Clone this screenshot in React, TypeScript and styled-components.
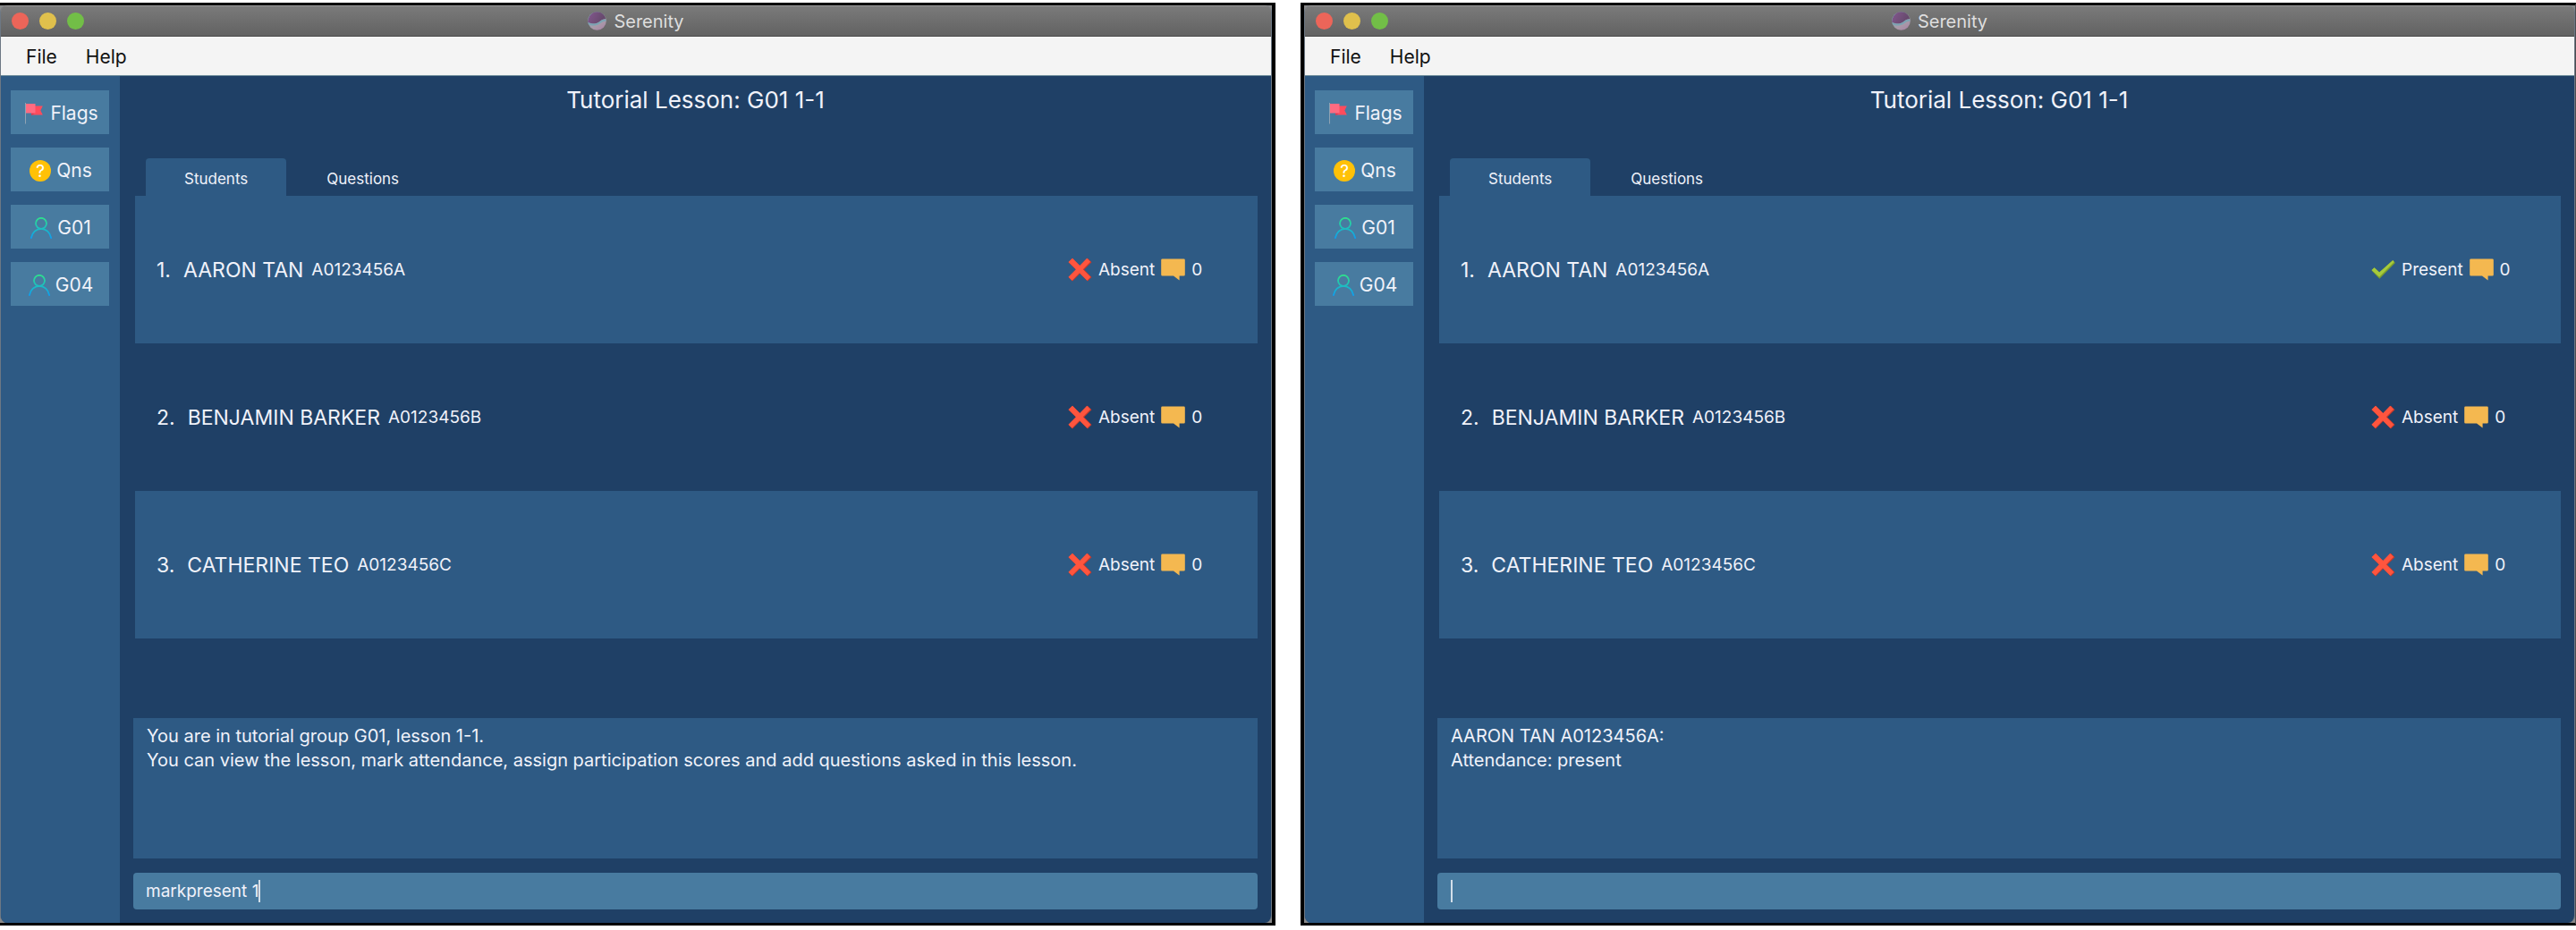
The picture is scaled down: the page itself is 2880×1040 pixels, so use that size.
import React, { useId, useState } from "react";
import styled, { createGlobalStyle, css } from "styled-components";

const color = {
  night: "#1f4066",
  panel: "#2e5a84",
  control: "#487ba0",
  text: "#f0f2fa",
  menu: "#f4f4f4",
};

const GlobalStyle = createGlobalStyle`
  * { box-sizing: border-box; }
  body {
    margin: 0;
    background: #ffffff;
    color: ${color.text};
    font-family: Inter, "Liberation Sans", sans-serif;
  }
  button, input { font: inherit; color: inherit; }
`;

const Desktop = styled.div`
  display: grid;
  grid-template-columns: 1fr 1fr;
  gap: 28px;
  min-height: 100vh;
  padding: 3px 0 5px;
`;

const Frame = styled.section<{ $side: "left" | "right" }>`
  display: flex;
  min-width: 0;
  background: #8a8a8a;
  border: 3px solid #000000;
  ${({ $side }) =>
    $side === "left"
      ? css`
          border-left: 0;
          border-right-width: 4px;
        `
      : css`
          border-left-width: 4px;
          border-right: 1px solid #4c4c50;
        `}
`;

const Window = styled.div`
  display: flex;
  flex: 1;
  flex-direction: column;
  min-width: 0;
  overflow: hidden;
  border: 0 solid #6d7884;
  border-width: 0 1px;
  border-radius: 8px;
`;

const TitleBar = styled.header`
  display: grid;
  grid-template-columns: 1fr auto 1fr;
  align-items: center;
  height: 35px;
  padding: 0 12px;
  background: linear-gradient(#7a7a7a, #626262);
  border-top: 1px solid #9a9a9a;
  border-bottom: 1px solid #484848;
`;

const Lights = styled.div`
  display: flex;
  gap: 12px;
`;

const Light = styled.button<{ $tint: string }>`
  width: 19px;
  height: 19px;
  padding: 0;
  border: 0;
  border-radius: 50%;
  background: ${({ $tint }) => $tint};
`;

const AppName = styled.div`
  display: flex;
  align-items: center;
  gap: 8px;
  color: #dedede;
  font-size: 20px;
  line-height: 24px;
`;

const MenuBar = styled.nav`
  display: flex;
  align-items: center;
  gap: 32px;
  height: 44px;
  padding: 2px 28px 0;
  background: ${color.menu};
  border-bottom: 1px solid #6f8e9c;
`;

const MenuItem = styled.button`
  padding: 0;
  border: 0;
  background: none;
  color: #111111;
  font-size: 21px;
  line-height: 24px;
`;

const Body = styled.div`
  display: flex;
  flex: 1;
  background: ${color.night};
`;

const Sidebar = styled.aside`
  display: flex;
  flex: 0 0 133px;
  flex-direction: column;
  gap: 15px;
  padding: 16px 12px 16px 11px;
  background: ${color.panel};
`;

const SideButton = styled.button`
  display: flex;
  align-items: center;
  justify-content: center;
  gap: 6px;
  height: 49px;
  padding: 2px 0 0 2px;
  border: 0;
  background: ${color.control};
  font-size: 21px;
  line-height: 24px;
`;

const Main = styled.main`
  display: flex;
  flex: 1;
  flex-direction: column;
  min-width: 0;
  padding: 12px 15px 15px;
`;

const Heading = styled.h1`
  margin: 0 0 50px;
  font-size: 26px;
  font-weight: 400;
  line-height: 30px;
  text-align: center;
`;

const Tabs = styled.div`
  display: flex;
  gap: 2px;
  padding: 0 14px;
`;

const Tab = styled.button<{ $active?: boolean }>`
  height: 42px;
  padding: 3px 43px 0;
  border: 0;
  border-radius: 4px 4px 0 0;
  background: ${({ $active }) => ($active ? color.panel : "transparent")};
  font-size: 17px;
  line-height: 24px;
`;

const StudentList = styled.ul`
  margin: 0 0 16px 2px;
  padding: 0;
  list-style: none;
`;

const StudentRow = styled.li`
  display: flex;
  align-items: center;
  height: 165px;
  padding-left: 24px;
  &:nth-child(odd) {
    background: ${color.panel};
  }
`;

const Identity = styled.div`
  display: flex;
  flex: 1;
  align-items: center;
  font-size: 23px;
  line-height: 28px;
`;

const Name = styled.span`
  margin: 0 9px 0 14px;
`;

const Matric = styled.span`
  font-size: 19px;
  line-height: 24px;
`;

const Status = styled.div`
  display: flex;
  flex: 0 0 212px;
  align-items: center;
  gap: 7px;
  font-size: 19px;
  line-height: 24px;
`;

const Result = styled.div`
  min-height: 157px;
  margin: auto 0 16px;
  padding: 7px 15px;
  background: ${color.panel};
  font-size: 20px;
  line-height: 27px;
  white-space: pre-line;
`;

const CommandBox = styled.label`
  display: flex;
  align-items: center;
  height: 41px;
  padding: 0 14px;
  border-radius: 4px;
  background: ${color.control};
`;

const CommandInput = styled.input`
  field-sizing: content;
  min-width: 0;
  padding: 0;
  border: 0;
  outline: 0;
  background: none;
  caret-color: transparent;
  font-size: 19px;
  line-height: 24px;
`;

const Caret = styled.span`
  width: 2px;
  height: 25px;
  background: #d3dfe9;
`;

const Icon = styled.svg`
  display: block;
  flex: none;
`;

function LogoIcon() {
  const id = useId();
  return (
    <Icon width="21" height="21" viewBox="0 0 21 21" aria-hidden="true">
      <defs>
        <linearGradient id={id} x1="0" y1="0" x2="0.6" y2="1">
          <stop offset="0.3" stopColor="#7fa9bb" />
          <stop offset="0.75" stopColor="#a99aa8" />
          <stop offset="1" stopColor="#a98aa6" />
        </linearGradient>
        <linearGradient id={`${id}t`} x1="0" y1="0" x2="1" y2="0.4">
          <stop offset="0" stopColor="#84588f" />
          <stop offset="1" stopColor="#64486a" />
        </linearGradient>
      </defs>
      <circle cx="10.5" cy="10.5" r="10.3" fill={`url(#${id})`} />
      <path d="M.3 12C.3 5 5 .2 10.5 .2c4.700 0 8.700 3.200 9.800 7.800-3.800.3-5.300 2-7.800 3.700C8.700 14.300 4.500 13.800 .3 12z" fill={`url(#${id}t)`} />
      <path d="M.4 12.200c4.500 1.800 8.800 1.700 12.500-.8 2.400-1.700 3.800-2.900 7.300-2.900l.3 2.200c-3.300-.2-4.700 1.200-7 2.700-4 2.600-8.500 2.600-12.500.8z" fill="#7ba3b3" />
    </Icon>
  );
}

function FlagIcon() {
  return (
    <Icon width="24" height="24" viewBox="0 0 24 24" aria-hidden="true">
      <path d="M9 3.500h12.800l-2.500 5 2.500 5H9z" fill="#ff4b5c" />
      <path d="M9 11.500h4.500L9 14z" fill="#d63a50" />
      <path d="M2.500 1h11v10.500h-11z" fill="#ff6b81" />
      <path d="M2.500 0v23.500" stroke="#8fa3b3" strokeWidth="1" />
    </Icon>
  );
}

const QuestionMark = styled.text`
  fill: #ffffff;
  font-size: 19px;
  text-anchor: middle;
`;

function QuestionIcon() {
  return (
    <Icon width="24" height="24" viewBox="0 0 24 24" aria-hidden="true">
      <circle cx="12" cy="12" r="12" fill="#ffc107" />
      <QuestionMark x="12" y="19">?</QuestionMark>
    </Icon>
  );
}

function PersonIcon() {
  const id = useId();
  return (
    <Icon width="24" height="24" viewBox="0 0 24 24" aria-hidden="true">
      <defs>
        <linearGradient id={id} gradientUnits="userSpaceOnUse" x1="0" y1="0" x2="0" y2="24">
          <stop offset="0" stopColor="#2fe38a" />
          <stop offset="1" stopColor="#0c9cf2" />
        </linearGradient>
      </defs>
      <g fill="none" stroke={`url(#${id})`} strokeWidth="1.8" strokeLinecap="round">
        <circle cx="12" cy="6.800" r="6" />
        <path d="M.9 23C2 17 6.500 12.900 12 12.900S22 17 23.100 23" />
      </g>
    </Icon>
  );
}

function CrossIcon() {
  return (
    <Icon width="27" height="27" viewBox="0 0 27 27" aria-hidden="true">
      <path d="M5 .8l8.500 8.500L22 .8l4.500 4.400-8.400 8.400 8.400 8.500-4.500 4.300-8.500-8.500L5 26.400l-4.500-4.300 8.500-8.500L.5 5.200z" fill="#c2382c" />
      <path d="M5 .8l8.200 8.200L21.200 .8l3.900 4-8.300 8.500 8.500 8.500-3.900 4-8.500-8.500-8.300 8.400-4.100-4 8.400-8.400L.5 5z" fill="#ff553e" />
    </Icon>
  );
}

function CheckIcon() {
  return (
    <Icon width="27" height="27" viewBox="0 0 27 27" aria-hidden="true">
      <path d="M.5 14.500l3-3.200 5.700 5.300L24.300 3l2.500 3L9.300 23.800z" fill="#7d9f2c" />
      <path d="M.5 14l3-2.700 5.700 5.300L24.300 3l1.300 1.900L9.100 21.700z" fill="#a6cb3c" />
    </Icon>
  );
}

function CommentIcon() {
  return (
    <Icon width="27" height="27" viewBox="0 0 27 27" aria-hidden="true">
      <path d="M1.500 1.500h24q1.300 0 1.300 1.300v16.400q0 1.300-1.300 1.300H20.600v5L14 20.500H1.500Q.2 20.500 .2 19.200V2.800Q.2 1.500 1.500 1.500z" fill="#f4b850" />
    </Icon>
  );
}

const sideLinks = [
  { label: "Flags", icon: <FlagIcon /> },
  { label: "Qns", icon: <QuestionIcon /> },
  { label: "G01", icon: <PersonIcon /> },
  { label: "G04", icon: <PersonIcon /> },
];

const students = [
  { name: "AARON TAN", matric: "A0123456A" },
  { name: "BENJAMIN BARKER", matric: "A0123456B" },
  { name: "CATHERINE TEO", matric: "A0123456C" },
];

interface SerenityProps {
  side: "left" | "right";
  present: string[];
  result: string;
  initialCommand: string;
}

function SerenityWindow({ side, present, result, initialCommand }: SerenityProps) {
  const [command, setCommand] = useState(initialCommand);
  return (
    <Frame $side={side}>
      <Window>
        <TitleBar>
          <Lights>
            <Light $tint="#ec6559" aria-label="Close" />
            <Light $tint="#e0c04c" aria-label="Minimise" />
            <Light $tint="#72be47" aria-label="Zoom" />
          </Lights>
          <AppName>
            <LogoIcon />
            Serenity
          </AppName>
        </TitleBar>
        <MenuBar>
          <MenuItem>File</MenuItem>
          <MenuItem>Help</MenuItem>
        </MenuBar>
        <Body>
          <Sidebar>
            {sideLinks.map(({ label, icon }) => (
              <SideButton key={label}>
                {icon}
                {label}
              </SideButton>
            ))}
          </Sidebar>
          <Main>
            <Heading>Tutorial Lesson: G01 1-1</Heading>
            <Tabs role="tablist">
              <Tab role="tab" aria-selected="true" $active>
                Students
              </Tab>
              <Tab role="tab" aria-selected="false">
                Questions
              </Tab>
            </Tabs>
            <StudentList>
              {students.map(({ name, matric }, index) => {
                const here = present.includes(matric);
                return (
                  <StudentRow key={matric}>
                    <Identity>
                      <span>{index + 1}.</span>
                      <Name>{name}</Name>
                      <Matric>{matric}</Matric>
                    </Identity>
                    <Status>
                      {here ? <CheckIcon /> : <CrossIcon />}
                      <span>{here ? "Present" : "Absent"}</span>
                      <CommentIcon />
                      <span>0</span>
                    </Status>
                  </StudentRow>
                );
              })}
            </StudentList>
            <Result role="status">{result}</Result>
            <CommandBox>
              <CommandInput
                aria-label="Command"
                value={command}
                onChange={(event) => setCommand(event.target.value)}
              />
              <Caret />
            </CommandBox>
          </Main>
        </Body>
      </Window>
    </Frame>
  );
}

export default function App() {
  return (
    <>
      <GlobalStyle />
      <Desktop>
        <SerenityWindow
          side="left"
          present={[]}
          result={
            "You are in tutorial group G01, lesson 1-1.\nYou can view the lesson, mark attendance, assign participation scores and add questions asked in this lesson."
          }
          initialCommand="markpresent 1"
        />
        <SerenityWindow
          side="right"
          present={["A0123456A"]}
          result={"AARON TAN A0123456A:\nAttendance: present"}
          initialCommand=""
        />
      </Desktop>
    </>
  );
}
